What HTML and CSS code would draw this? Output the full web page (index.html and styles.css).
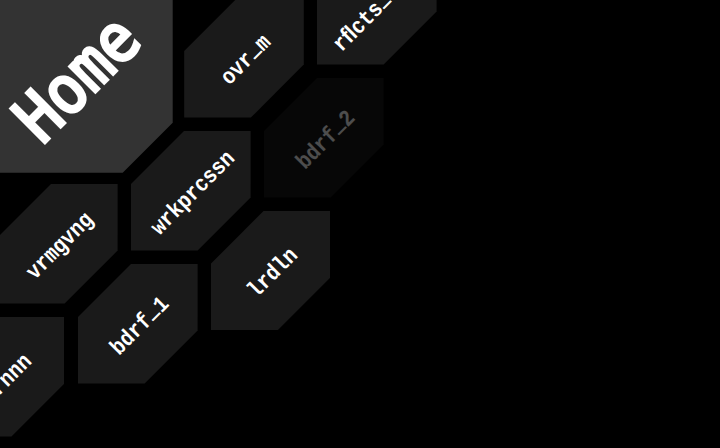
FILE: index.html
```
<!DOCTYPE html>
<html lang="en">
<head>
<meta charset="utf-8">
<title>Home</title>
<link rel="stylesheet" href="styles.css">
</head>
<body>
<nav class="map">
<a class="tile home"><span class="label">Home</span></a>
<a class="tile ovr"><span class="label">ovr<span class="low">_</span>m</span></a>
<a class="tile reflect"><span class="label">rﬂcts<span class="low">_</span></span></a>
<a class="tile work"><span class="label">wrkprcssn</span></a>
<a class="tile two off"><span class="label">bdrf<span class="low">_</span>2</span></a>
<a class="tile verm"><span class="label">vrmgvng</span></a>
<a class="tile one"><span class="label">bdrf<span class="low">_</span>1</span></a>
<a class="tile lrd"><span class="label">lrdln</span></a>
<a class="tile run"><span class="label">brnnn</span></a>
</nav>
</body>
</html>
```
FILE: styles.css
```
body { margin: 0; background: #000; }
.map { position: relative; width: 720px; height: 448px; overflow: hidden; }
.tile {
  --cut: 53px;
  position: absolute;
  width: 119.6px;
  height: 119.6px;
  display: flex;
  align-items: center;
  justify-content: center;
  background: #1a1a1a;
  color: #fff;
  font: bold 20px/24px "Liberation Mono", monospace;
  clip-path: polygon(var(--cut) 0, 100% 0, 100% calc(100% - var(--cut)), calc(100% - var(--cut)) 100%, 0 100%, 0 var(--cut));
}
.label { white-space: nowrap; transform: translate(2.5px, 2.5px) rotate(-45deg) scaleY(1.15); }
.low { display: inline-block; transform: translateY(-3px) scaleX(.85); -webkit-text-stroke: .8px #fff; }
.off { opacity: .3; }
.home {
  --cut: 50px;
  left: -20px;
  top: -20px;
  width: 192.7px;
  height: 192.7px;
  background: #333;
  font: 60px/70px "DejaVu Sans Mono", monospace;
  clip-path: polygon(0 0, 100% 0, 100% calc(100% - var(--cut)), calc(100% - var(--cut)) 100%, 0 100%);
}
.home .label { -webkit-text-stroke: 3px #fff; transform: translate(.5px, 2px) rotate(-45deg) scaleY(1.1); }
.ovr { left: 184.2px; top: -2px; }
.reflect { left: 317px; top: -55px; }
.reflect .label { transform: translate(-14px, 18px) rotate(-45deg) scaleY(1.15); }
.work { left: 131px; top: 131px; }
.two { left: 264px; top: 78px; }
.verm { left: -2px; top: 184px; }
.one { left: 78px; top: 264px; }
.lrd { left: 210.8px; top: 210.8px; }
.run { left: -55.2px; top: 317px; }
```
